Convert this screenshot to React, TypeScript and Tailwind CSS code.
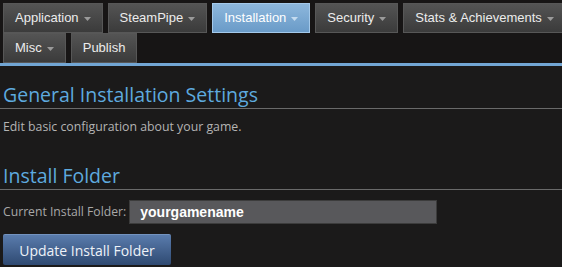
import React from "react";

const tabs = [
  { label: "Application", menu: true },
  { label: "SteamPipe", menu: true },
  { label: "Installation", menu: true, active: true },
  { label: "Security", menu: true },
  { label: "Stats & Achievements", menu: true },
  { label: "Misc", menu: true },
  { label: "Publish", menu: false },
];

function Caret({ light }: { light?: boolean }) {
  return (
    <svg width="7" height="4" viewBox="0 0 7 4" className="ml-[5px] mt-[2px]">
      <path d="M0 0 L7 0 L3.5 4 Z" fill={light ? "#c4dbef" : "#9a9a9a"} />
    </svg>
  );
}

export default function App() {
  return (
    <div className="w-[562px] h-[267px] overflow-hidden bg-[#1b1a1a] font-['Liberation_Sans',Arial,sans-serif]">
      {/* tab strip */}
      <div className="w-[580px] bg-[#171515] pt-[3px] pl-[3px] border-b-[3px] border-[#72a6d4]">
        <div className="flex flex-wrap gap-x-[5px]">
          {tabs.map((t) => (
            <div
              key={t.label}
              className={
                t.active
                  ? "flex items-center h-[30px] px-[11px] border border-[#a4c9ea] bg-gradient-to-b from-[#8db7dc] to-[#6a9bc8] text-[13px] text-white"
                  : "flex items-center h-[30px] px-[11px] border border-[#575757] bg-gradient-to-b from-[#545454] to-[#3b3b3b] text-[13px] text-[#ececec]"
              }
            >
              <span>{t.label}</span>
              {t.menu && <Caret light={t.active} />}
            </div>
          ))}
        </div>
      </div>

      {/* content */}
      <div className="font-['Open_Sans','Noto_Sans',sans-serif]">
        <h2 className="mt-[17px] pl-[3px] pb-[1px] border-b border-[#6a6a6a] text-[19.5px] leading-[24px] text-[#5eaadf]">
          General Installation Settings
        </h2>
        <p className="mt-[10px] pl-[3px] text-[12.3px] leading-[16px] text-[#b4b4b4]">
          Edit basic configuration about your game.
        </p>

        <h2 className="mt-[29px] pl-[3px] pb-[1px] border-b border-[#6a6a6a] text-[19.5px] leading-[24px] text-[#5eaadf]">
          Install Folder
        </h2>

        <div className="mt-[10px] pl-[3px] flex items-center">
          <span className="text-[12.2px] text-[#a8a8a8] mr-[3px]">Current Install Folder:</span>
          <div className="w-[308px] h-[24px] bg-[#58585b] border border-[#3c3c3c] pl-[10px] flex items-center font-['Liberation_Sans',Arial,sans-serif] font-bold text-[14px] text-white">
            yourgamename
          </div>
        </div>

        <div className="mt-[10px] pl-[3px]">
          <button className="w-[168px] h-[31px] rounded-[2px] border-t border-[#7393bf] bg-gradient-to-b from-[#5a7cad] to-[#2f4a72] text-[14px] text-[#eef2f8]">
            Update Install Folder
          </button>
        </div>
      </div>
    </div>
  );
}
